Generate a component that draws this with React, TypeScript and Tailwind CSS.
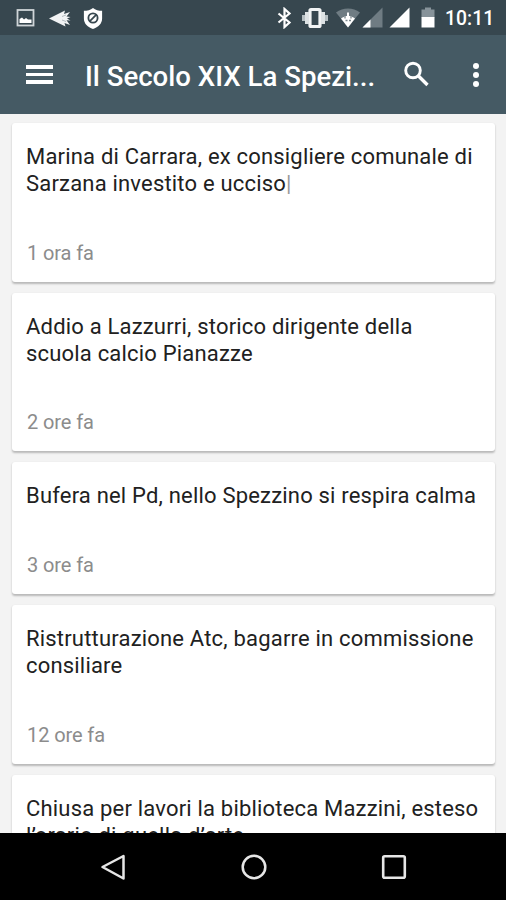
import React from "react";

type Article = {
  lines: string[];
  time: string;
  cursor?: boolean;
};

const articles: Article[] = [
  {
    lines: [
      "Marina di Carrara, ex consigliere comunale di",
      "Sarzana investito e ucciso",
    ],
    time: "1 ora fa",
    cursor: true,
  },
  {
    lines: [
      "Addio a Lazzurri, storico dirigente della",
      "scuola calcio Pianazze",
    ],
    time: "2 ore fa",
  },
  {
    lines: ["Bufera nel Pd, nello Spezzino si respira calma"],
    time: "3 ore fa",
  },
  {
    lines: ["Ristrutturazione Atc, bagarre in commissione", "consiliare"],
    time: "12 ore fa",
  },
  {
    lines: [
      "Chiusa per lavori la biblioteca Mazzini, esteso",
      "l’orario di quella d’arte",
    ],
    time: "",
  },
];

const StatusBar = () => {
  return (
    <div className="flex h-[35px] shrink-0 items-center bg-[#37474f] pl-4 pr-[12px] pt-px text-white">
      <svg className="h-[18px] w-[19px]" viewBox="0 0 19 18">
        <rect x="1.5" y="1" width="16" height="15.5" fill="none" stroke="#cfd5d8" strokeWidth="1.8" />
        <path d="M3.5 14v-4l2.500-1.500 2 2 2-1.500 2 1.500 3.500 0v3.500z" fill="#fff" />
      </svg>
      <svg className="ml-[13px] h-[20px] w-[24px]" viewBox="0 0 24 20">
        <path d="M1 10.500 17 2.500l-1 3.500L22 4l-3.500 4.500 4 .500-3.500 1.500 3.500 2-4-.3 3.500 4.800-5.500-2 1 3.500z" fill="#f1f3f4" />
        <path d="M14 12l4 1.500M14 8.500l4-1.500" stroke="#9aa4a9" strokeWidth=".7" />
      </svg>
      <svg className="ml-[11px] h-[23px] w-[20px]" viewBox="0 0 20 24">
        <path d="M10 1C7.500 3 4 4 .500 4v8c0 5.500 4 9 9.500 11 5.500-2 9.500-5.500 9.500-11V4C16 4 12.500 3 10 1z" fill="#fff" />
        <circle cx="10" cy="11.500" r="4.800" fill="none" stroke="#37474f" strokeWidth="1.900" />
        <path d="m6.500 15 7-7" stroke="#37474f" strokeWidth="1.900" />
      </svg>
      <div className="grow" />
      <svg className="h-[22px] w-[15px]" viewBox="0 0 15 22">
        <path d="m1.500 6.500 11 9-5 4.500V2l5 4.500-11 9" fill="none" stroke="#fff" strokeWidth="2.200" />
      </svg>
      <svg className="ml-[9px] h-[22px] w-[28px]" viewBox="0 0 28 22">
        <rect x="9" y="2.500" width="10" height="17" rx="1" fill="none" stroke="#f1f3f4" strokeWidth="3.200" />
        <path d="M4 5h4v12H4zM20 5h4v12h-4z" fill="#dde2e4" />
        <path d="M1 8h3v6H1zM24 8h3v6h-3z" fill="#b5bec2" />
      </svg>
      <svg className="ml-[6px] h-[22px] w-[26px]" viewBox="0 0 26 22">
        <path d="M1 5.500C8 0 18 0 25 5.500L13 20.500z" fill="#6f7c83" />
        <path d="M6 11.500c4-3.500 10-3.500 14 0L13 20.500z" fill="#fff" />
        <path d="M13 5.500v7M9.500 10h7" stroke="#fff" strokeWidth="2" />
        <path d="M10 9v2.500M16 9v2.500M10.500 13.500h2M14 13.500h2" stroke="#7a868c" strokeWidth="1.300" />
      </svg>
      <svg className="ml-px h-[22px] w-[21px]" viewBox="0 0 21 22">
        <path d="M20.500 .500v20H.500z" fill="#6f7c83" />
        <path d="M8.500 12.500v8H.500z" fill="#fff" />
      </svg>
      <svg className="ml-[6px] h-[22px] w-[21px]" viewBox="0 0 21 22">
        <path d="M20.500 .500v20H.500z" fill="#fff" />
      </svg>
      <svg className="ml-[10px] h-[22px] w-[16px]" viewBox="0 0 16 22">
        <path d="M5 .500h6V2.500h3.500v8h-13v-8H5z" fill="#87939a" />
        <path d="M1.500 10h13v10.500h-13z" fill="#fff" />
      </svg>
      <span className="ml-[9px] w-[49px] whitespace-nowrap pt-px text-[19.300px] font-medium leading-[24px] tracking-[0.1px]">
        10:11
      </span>
    </div>
  );
};

const Toolbar = () => {
  return (
    <div className="flex h-[79px] shrink-0 items-center bg-[#455a64] pl-[26px] pr-[27px] text-white">
      <div className="flex w-[27px] flex-col gap-[4px]">
        <div className="h-[3.500px] bg-white" />
        <div className="h-[3.500px] bg-white" />
        <div className="h-[3.500px] bg-white" />
      </div>
      <h1 className="ml-[32px] w-[300px] whitespace-nowrap pt-[4px] text-[27.600px] font-medium leading-[34px]">
        Il Secolo XIX La Spezi...
      </h1>
      <div className="grow" />
      <button className="pb-px">
        <svg className="h-[26px] w-[26px]" viewBox="0 0 26 26">
          <circle cx="10" cy="9.500" r="7.300" fill="none" stroke="#fff" strokeWidth="2.900" />
          <path d="m15.500 15 9 9" stroke="#fff" strokeWidth="3.400" />
        </svg>
      </button>
      <button className="ml-[44px] flex flex-col gap-[3px]">
        <span className="size-[6px] rounded-full bg-white" />
        <span className="size-[6px] rounded-full bg-white" />
        <span className="size-[6px] rounded-full bg-white" />
      </button>
    </div>
  );
};

const ArticleCard = ({ article }: { article: Article }) => {
  return (
    <div className="shrink-0 rounded-[3px] bg-white pb-[17.200px] pl-[14px] pt-[20px] shadow-[0_1.500px_2px_rgba(0,0,0,0.24)]">
      <h2 className="text-[22px] leading-[27px] tracking-[0.190px] text-[#212121]">
        {article.lines.map((line) => (
          <span key={line} className="block whitespace-nowrap">
            {line}
            {article.cursor && line === article.lines[article.lines.length - 1] && (
              <span className="text-[#999]">|</span>
            )}
          </span>
        ))}
      </h2>
      {article.time && (
        <p className="mt-[43.500px] pl-px text-[20px] leading-[24px] tracking-[-0.100px] text-[#8c8c8c]">
          {article.time}
        </p>
      )}
    </div>
  );
};

const NavigationBar = () => {
  return (
    <div className="flex h-[67px] shrink-0 items-center justify-between bg-black pl-[99px] pr-[98px]">
      <svg className="size-[28px]" viewBox="0 0 28 28">
        <path d="M24.500 3v22.500L3.500 14z" fill="none" stroke="#e6e6e6" strokeWidth="2.500" strokeLinejoin="round" />
      </svg>
      <svg className="size-[28px]" viewBox="0 0 28 28">
        <circle cx="14" cy="14" r="11.300" fill="none" stroke="#e6e6e6" strokeWidth="2.500" />
      </svg>
      <svg className="size-[28px]" viewBox="0 0 28 28">
        <rect x="3.200" y="3.200" width="21.600" height="21.600" rx="1.500" fill="none" stroke="#e6e6e6" strokeWidth="2.600" />
      </svg>
    </div>
  );
};

const App = () => {
  return (
    <div className="flex h-[900px] w-[506px] flex-col overflow-hidden bg-[#f3f3f3] font-[Roboto,sans-serif]">
      <StatusBar />
      <Toolbar />
      <div className="flex min-h-0 grow flex-col gap-[11px] overflow-hidden pl-[12px] pr-[11px] pt-[9px]">
        {articles.map((article) => (
          <ArticleCard key={article.lines[0]} article={article} />
        ))}
      </div>
      <NavigationBar />
    </div>
  );
};

export default App;
